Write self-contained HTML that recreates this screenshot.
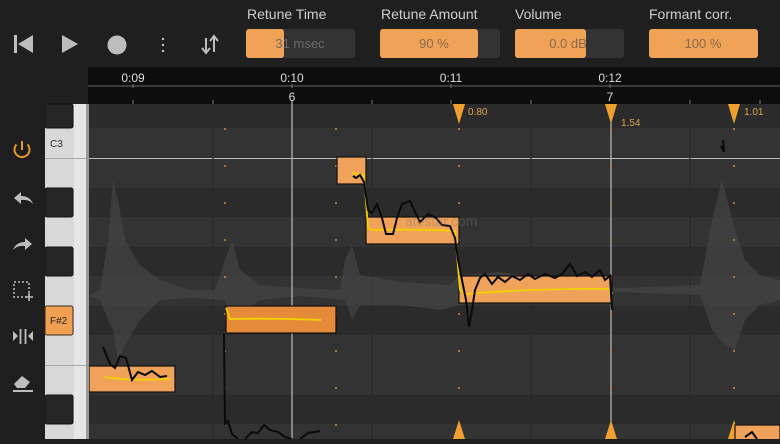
<!DOCTYPE html>
<html><head><meta charset="utf-8"><style>
body{margin:0;width:780px;height:439px;overflow:hidden;background:#1e1e1e;font-family:"Liberation Sans",sans-serif}
</style></head><body>
<svg width="780" height="439" xmlns="http://www.w3.org/2000/svg" font-family="Liberation Sans, sans-serif">
<rect width="780" height="439" fill="#1f1f1f"/>
<rect x="14" y="35" width="3" height="18" fill="#bdbdbd"/>
<polygon points="18,44 33,35 33,53" fill="#bdbdbd"/>
<polygon points="62,35 78,44 62,53" fill="#bdbdbd"/>
<circle cx="117" cy="45" r="9.5" fill="#bdbdbd"/>
<circle cx="163" cy="39" r="1.2" fill="#bdbdbd"/><circle cx="163" cy="45" r="1.2" fill="#bdbdbd"/><circle cx="163" cy="51" r="1.2" fill="#bdbdbd"/>
<path d="M206 38v14M202 48l4 5 4-5M214 52V37M210 41l4-5 4 5" stroke="#bdbdbd" stroke-width="2" fill="none"/>
<g font-size="14" fill="#cfcfcf">
<text x="247" y="19">Retune Time</text><text x="381" y="19">Retune Amount</text><text x="515" y="19">Volume</text><text x="649" y="19">Formant corr.</text>
</g>
<rect x="246" y="29" width="109" height="29" rx="3" fill="#333"/>
<rect x="246" y="29" width="38" height="29" rx="3" fill="#f0a257"/>
<rect x="380" y="29" width="120" height="29" rx="3" fill="#333"/>
<rect x="380" y="29" width="98" height="29" rx="3" fill="#f0a257"/>
<rect x="515" y="29" width="109" height="29" rx="3" fill="#333"/>
<rect x="515" y="29" width="71" height="29" rx="3" fill="#f0a257"/>
<rect x="649" y="29" width="109" height="29" rx="3" fill="#f0a257"/>
<g font-size="13" fill="#8a6a4a" text-anchor="middle">
<text x="300" y="48" fill="#6a6a6a">31 msec</text><text x="434" y="48">90 %</text><text x="568" y="48">0.0 dB</text><text x="703" y="48">100 %</text>
</g>
<rect x="88" y="67" width="692" height="37" fill="#0d0d0d"/>
<line x1="88" y1="86" x2="780" y2="86" stroke="#666" stroke-width="1"/>
<g font-size="12" fill="#ddd" text-anchor="middle">
<text x="133" y="82">0:09</text><text x="292" y="82">0:10</text><text x="451" y="82">0:11</text><text x="610" y="82">0:12</text>
<text x="292" y="101">6</text><text x="610" y="101">7</text>
</g>
<g stroke="#777"><path d="M133 84v4M292 84v4M451 84v4M610 84v4M213 100v4M372 100v4M531 100v4M690 100v4M133 100v4M451 100v4M760 100v4"/></g>
<rect x="88" y="104" width="692" height="335" fill="#333"/>
<g fill="#2b2b2b">
<rect x="88" y="104" width="692" height="24"/>
<rect x="88" y="188" width="692" height="29"/>
<rect x="88" y="247" width="692" height="29"/>
<rect x="88" y="306" width="692" height="29"/>
<rect x="88" y="395" width="692" height="29"/>
</g>
<line x1="88" y1="158.5" x2="780" y2="158.5" stroke="#bdbdbd"/>
<g stroke="#2a2a2a" stroke-width="1.2"><path d="M213 104v335M372 104v335M531 104v335M690 104v335"/></g>
<g fill="#454545" opacity="0.7">
<polygon points="100,290 108,240 113,180 118,200 125,240 140,265 160,280 190,290 215,290 225,260 232,240 240,270 260,285 300,288 340,290 345,260 352,245 360,275 400,282 450,285 460,275 500,272 560,282 620,288 700,285 712,220 722,180 735,230 745,260 760,275 780,280 780,300 760,305 745,320 735,350 725,345 712,330 700,295 620,292 560,298 500,302 460,305 440,310 400,305 360,305 352,320 345,300 300,296 260,300 240,315 232,335 225,300 190,298 160,300 140,320 125,345 118,360 113,330 108,320 100,300 88,296"/>
</g>
<g stroke="#bdbdbd" stroke-width="1.2"><path d="M292 100v339M611 104v335"/></g>
<g stroke="#d98a30" stroke-width="1.5" stroke-dasharray="2,35"><path d="M225 128v311M336 128v311M459 128v311M611 128v311M734 128v311"/></g>
<g fill="#f0a030">
<polygon points="453,104 465,104 459,124"/><polygon points="605,104 617,104 611,124"/><polygon points="728,104 740,104 734,124"/>
<polygon points="453,439 465,439 459,420"/><polygon points="605,439 617,439 611,420"/><polygon points="728,439 740,439 734,420"/>
</g>
<g font-size="10" fill="#e0a050"><text x="468" y="115">0.80</text><text x="621" y="126">1.54</text><text x="744" y="115">1.01</text></g>
<g stroke="#111" stroke-width="1.2">
<rect x="89" y="366" width="86" height="26" fill="#f0a25a"/>
<rect x="226" y="306" width="110" height="27" fill="#e58a38"/>
<rect x="337" y="157" width="29" height="27" fill="#f0a25a"/>
<rect x="366" y="217" width="93" height="27" fill="#f0a25a"/>
<rect x="459" y="276" width="153" height="27" fill="#f0a25a"/>
<rect x="735" y="425" width="45" height="16" fill="#f0a25a"/>
</g>
<g fill="none" stroke="#f5d000" stroke-width="1.8">
<path d="M104 377Q130 381 170 379"/>
<path d="M226 308L230 319Q280 318 321 320"/>
<path d="M352 173L364 175L368 228L372 230Q420 229 455 231L460 290L465 294Q540 288 610 289L612 294"/>
</g>
<g fill="none" stroke="#0a0a0a" stroke-width="2">
<path d="M103 347L110 364L115 368L120 356L126 358L132 380L138 372L145 375L152 371L160 377L167 376"/>
<path d="M224 334L225 424L228 421L232 434L238 439M245 439L252 432L258 433L264 425L270 430L278 432L285 437L292 439M300 439L308 433L315 432L320 431"/>
<path d="M353 176L356 178L360 175L364 182L368 210L372 213L377 204L382 218L386 234L393 234L397 218L402 204L410 201L415 212L420 222L428 214L436 218L442 225L450 226L455 238L458 260L462 280L466 300L469 327L472 310L475 290L480 278L485 274L492 284L498 277L505 282L512 276L520 280L528 274L535 279L545 274L555 278L562 274L570 264L577 276L585 272L592 277L600 270L605 280L610 276L612 310"/>
<path d="M723 140L724 152L721 146"/>
<path d="M745 437L752 432L757 439"/>
</g>
<text x="405" y="226" font-size="14" fill="#777" opacity="0.4">atestar.com</text>
<rect x="45" y="104" width="43" height="335" fill="#d8d8d8"/>
<rect x="74" y="104" width="12" height="335" fill="#e6e6ea"/>
<rect x="86" y="104" width="3" height="335" fill="#9a9a9a"/>
<g stroke="#a8a8a8"><path d="M45 158.5H86M45 365.5H86"/></g>
<g fill="#262626" stroke="#111">
<rect x="45" y="104" width="28" height="24" rx="2"/>
<rect x="45" y="188" width="28" height="29" rx="2"/>
<rect x="45" y="247" width="28" height="29" rx="2"/>
<rect x="45" y="395" width="28" height="29" rx="2"/>
</g>
<rect x="45" y="306" width="28" height="29" rx="2" fill="#f0a050" stroke="#3a2a1a"/>
<text x="50" y="147" font-size="10" fill="#333">C3</text>
<text x="50" y="324" font-size="10" fill="#222">F#2</text>
<rect x="0" y="104" width="45" height="335" fill="#1e1e1e"/>
<path d="M16.5 144.5A7.5 7.5 0 1 0 27.5 144.5M22 141v9" stroke="#e8962e" stroke-width="2" fill="none"/>
<path d="M14 198l7-6v4q9 0 12 8q-4-5-12-4v4z" fill="#bdbdbd"/>
<path d="M32 244l-7-6v4q-9 0-12 8q4-5 12-4v4z" fill="#bdbdbd"/>
<rect x="14" y="282" width="15" height="15" fill="none" stroke="#bdbdbd" stroke-width="1.5" stroke-dasharray="2,2"/>
<path d="M29 293v8M25 297h8" stroke="#bdbdbd" stroke-width="1.5"/>
<path d="M13 331l5 5-5 5zM33 331l-5 5 5 5z" fill="#bdbdbd"/><path d="M20.5 329v15M25.5 329v15" stroke="#bdbdbd" stroke-width="1.8"/>
<path d="M14 384l8-8 8 6-5 6h-8z" fill="#bdbdbd"/><path d="M13 391h20" stroke="#bdbdbd" stroke-width="2"/>
</svg>
</body></html>
